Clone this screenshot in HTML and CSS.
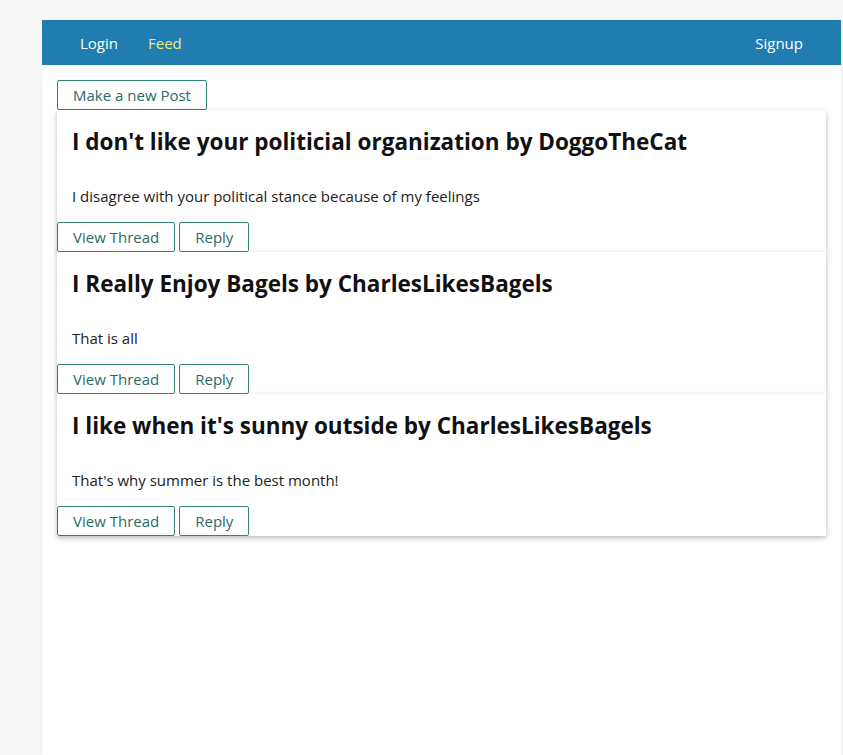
FILE: index.html
```html
<!DOCTYPE html>
<html>
<head>
<meta charset="utf-8">
<link rel="stylesheet" href="styles.css">
</head>
<body>
<div class="app">
  <header class="topbar">
    <nav class="nav-left">
      <a class="nav-link">Login</a>
      <a class="nav-link active">Feed</a>
    </nav>
    <nav class="nav-right">
      <a class="nav-link">Signup</a>
    </nav>
  </header>
  <main class="content">
    <button class="btn">Make a new Post</button>
    <div class="post">
      <h2 class="post-title">I don't like your politicial organization by DoggoTheCat</h2>
      <p class="post-body">I disagree with your political stance because of my feelings</p>
      <div class="post-actions"><button class="btn">View Thread</button><button class="btn">Reply</button></div>
    </div>
    <div class="post">
      <h2 class="post-title">I Really Enjoy Bagels by CharlesLikesBagels</h2>
      <p class="post-body">That is all</p>
      <div class="post-actions"><button class="btn">View Thread</button><button class="btn">Reply</button></div>
    </div>
    <div class="post">
      <h2 class="post-title">I like when it's sunny outside by CharlesLikesBagels</h2>
      <p class="post-body">That's why summer is the best month!</p>
      <div class="post-actions"><button class="btn">View Thread</button><button class="btn">Reply</button></div>
    </div>
  </main>
</div>
</body>
</html>
```
FILE: styles.css
```css
html, body {
  margin: 0;
  padding: 0;
  height: 100%;
}
body {
  background: #f7f7f7;
  font-family: "Open Sans", "Noto Sans", sans-serif;
  color: #1e1e1e;
}
.app {
  margin: 20px 0 0 42px;
  width: 799px;
  min-height: calc(100% - 20px);
  background: #ffffff;
  box-shadow: 0 0 2px rgba(0,0,0,0.08);
}
.topbar {
  height: 45px;
  background: #217db0;
  display: flex;
  align-items: center;
  justify-content: space-between;
  padding: 0 38px 0 38px;
}
.nav-left {
  display: flex;
  gap: 30px;
}
.nav-link {
  color: #ffffff;
  font-size: 15px;
  text-decoration: none;
}
.nav-link.active {
  color: #e6ec7a;
}
.content {
  padding: 15px;
}
.btn {
  font-family: "Open Sans", "Noto Sans", sans-serif;
  font-size: 15px;
  color: #2d6a66;
  background: #ffffff;
  border: 1px solid #35837a;
  border-radius: 2px;
  height: 30px;
  padding: 0 15px;
  margin: 0 4px 0 0;
  line-height: 28px;
  display: inline-block;
}
.content > .btn {
  height: 30px;
  display: block;
}
.post {
  background: #ffffff;
  box-shadow: 0 2px 5px rgba(0,0,0,0.28);
}
.post-title {
  margin: 0;
  padding: 16px 15px 0;
  font-size: 22.5px;
  font-weight: 700;
  line-height: 32px;
  color: #111;
}
.post-body {
  margin: 0;
  padding: 27px 15px 0;
  font-size: 15px;
  line-height: 22px;
  color: #222;
}
.post-actions {
  padding-top: 15px;
  display: flex;
}
```
